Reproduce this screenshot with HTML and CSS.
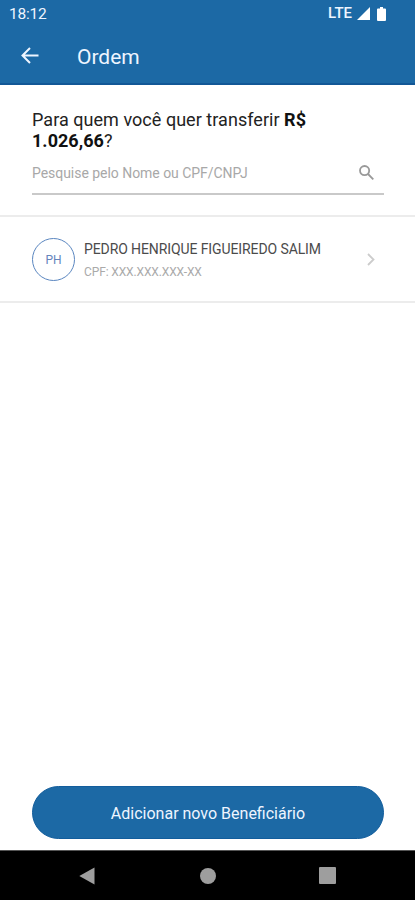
FILE: index.html
```html
<!DOCTYPE html>
<html lang="pt-BR">
<head>
<meta charset="utf-8">
<meta name="viewport" content="width=device-width, initial-scale=1">
<title>Ordem</title>
<link rel="stylesheet" href="styles.css">
</head>
<body>
<div class="screen">
  <header class="header">
    <div class="status">
      <span class="time">18:12</span>
      <span class="network">LTE</span>
      <svg class="signal" width="13" height="13" viewBox="0 0 13 13"><path d="M13 0v13H0z"/></svg>
      <svg class="battery" width="9" height="14" viewBox="0 0 9 14"><path d="M3 0h3v1.500h2q1 0 1 1V13q0 1-1 1H1q-1 0-1-1V2.500q0-1 1-1h2z"/></svg>
    </div>
    <div class="toolbar">
      <svg class="back" width="18" height="17" viewBox="0 0 18 17"><path d="M17.500 8.500H1.500M9 1L1.500 8.500 9 16"/></svg>
      <h1 class="title">Ordem</h1>
    </div>
  </header>
  <section class="search">
    <h2 class="question">Para quem você quer transferir <b>R$</b><br><b>1.026,66</b>?</h2>
    <div class="field">
      <span class="placeholder">Pesquise pelo Nome ou CPF/CNPJ</span>
      <svg class="lens" width="15" height="15" viewBox="0 0 15 15"><circle cx="5.600" cy="5.600" r="4.600"/><path d="M9 9l5.300 5.300"/></svg>
    </div>
  </section>
  <section class="contact">
    <div class="avatar">PH</div>
    <div class="person">
      <div class="name">PEDRO HENRIQUE FIGUEIREDO SALIM</div>
      <div class="document">CPF: XXX.XXX.XXX-XX</div>
    </div>
    <svg class="chevron" width="8" height="13" viewBox="0 0 8 13"><path d="M1 1l5.500 5.500L1 12"/></svg>
  </section>
  <main class="space"></main>
  <button class="add">Adicionar novo Beneficiário</button>
  <nav class="navbar">
    <svg width="16" height="18" viewBox="0 0 16 18"><path d="M15.500.500v17L.300 9z"/></svg>
    <svg class="home" width="16" height="16" viewBox="0 0 16 16"><circle cx="8" cy="8" r="8"/></svg>
    <svg width="17" height="17" viewBox="0 0 17 17"><rect width="17" height="17" rx="1"/></svg>
  </nav>
</div>
</body>
</html>
```
FILE: styles.css
```css
* { box-sizing: border-box; }
body { margin: 0; font-family: Roboto, sans-serif; background: #fff; }
svg { display: block; flex: none; }
h1, h2 { margin: 0; font-weight: 400; }
.screen { display: flex; flex-direction: column; width: 415px; height: 900px; }
.header { height: 85px; background: #1c69a5; border-bottom: 2px solid #125796; color: #eef5ff; }
.status { display: flex; align-items: center; height: 27px; padding: 0 29px 0 9px; }
.time { font-size: 15.500px; margin-right: auto; letter-spacing: -.2px; padding-top: 1px; }
.network { font-size: 15px; font-weight: 500; margin-right: 5px; margin-top: -1px; }
.signal { margin-right: 7px; }
.signal, .battery { fill: #fff; }
.toolbar { display: flex; align-items: center; height: 58px; padding-left: 21px; }
.back { fill: none; stroke: #eef5ff; stroke-width: 2; margin-top: -1px; }
.title { margin-left: 38px; padding-top: 1px; font-size: 21px; line-height: 28px; }
.search { height: 132px; padding: 24px 31px 0 32px; border-bottom: 2px solid #ececec; }
.question { font-size: 18px; line-height: 21px; letter-spacing: .04px; color: #222; white-space: nowrap; }
.question b { font-weight: 700; color: #111; }
.field { display: flex; align-items: center; justify-content: space-between; height: 44px; padding-right: 10px; border-bottom: 2px solid #c9c9c9; }
.placeholder { padding-top: 2px; font-size: 14px; letter-spacing: -.04px; color: #a8a8a8; }
.lens { fill: none; stroke: #999; stroke-width: 1.800; }
.contact { display: flex; align-items: center; height: 86px; padding: 0 40px 0 32px; border-bottom: 2px solid #ececec; }
.avatar { display: flex; align-items: center; justify-content: center; width: 43px; height: 43px; padding-top: 2px; border: 1px solid #5a86c0; border-radius: 50%; color: #6685bd; font-size: 12px; }
.person { margin-left: 9px; margin-right: auto; padding-top: 1px; white-space: nowrap; }
.name { font-size: 14px; line-height: 20px; letter-spacing: -.1px; color: #4b4b4b; }
.document { margin-top: 4px; font-size: 12px; line-height: 18px; letter-spacing: -.12px; color: #aaa; }
.chevron { fill: none; stroke: #ccc; stroke-width: 1.800; }
.space { flex: 1; }
.add { width: 352px; height: 53px; margin: 0 0 11px 32px; padding: 2px 0 0; border: 1px solid #125d9c; border-radius: 27px; background: #1c69a5; color: #eef5ff; font: 400 16px Roboto, sans-serif; }
.navbar { display: flex; align-items: center; justify-content: space-between; height: 50px; padding: 0 79px; background: #000; border-top: 1px solid #555; fill: #9e9e9e; }
.home { margin-left: 1px; }
```
